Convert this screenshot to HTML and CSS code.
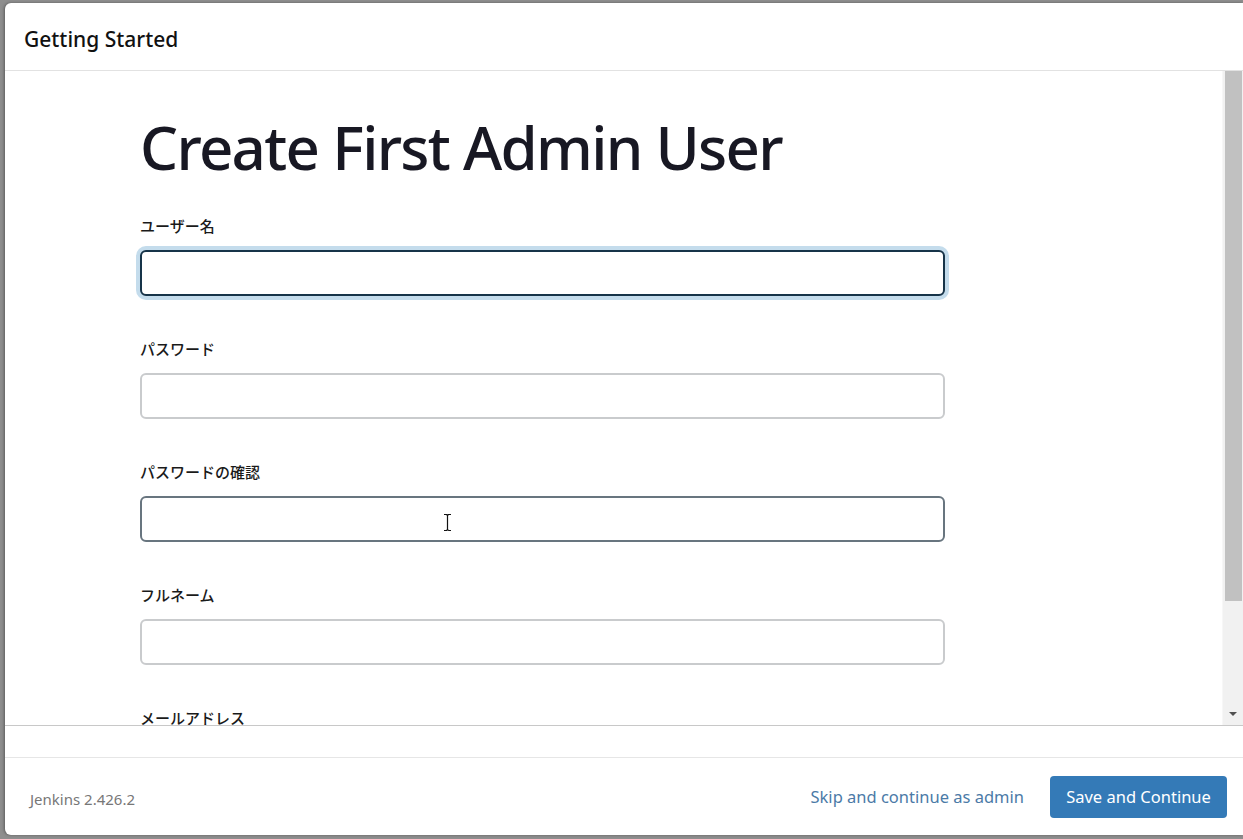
FILE: index.html
```html
<!DOCTYPE html>
<html lang="ja">
<head>
<meta charset="utf-8">
<title>Getting Started</title>
<link rel="stylesheet" href="styles.css">
</head>
<body>
<div class="dialog">
  <header class="dlg-header">Getting Started</header>
  <div class="dlg-main">
    <div class="dlg-content">
      <h1 class="title">Create First Admin User</h1>
      <form class="form">
        <div class="field">
          <label class="label">ユーザー名</label>
          <input class="input input-focus" type="text">
        </div>
        <div class="field">
          <label class="label">パスワード</label>
          <input class="input" type="password">
        </div>
        <div class="field field-cursor">
          <label class="label">パスワードの確認</label>
          <input class="input input-hover" type="password">
          <svg class="ibeam" width="9" height="19" viewBox="0 0 9 19"><path d="M1 1.5h2.5M5.5 1.5H8M4.5 2.5v14M1 17.5h2.5M5.5 17.5H8M3.5 1.5l1 1 1-1M3.5 17.5l1-1 1 1" stroke="#111" stroke-width="1.2" fill="none"/></svg>
        </div>
        <div class="field">
          <label class="label">フルネーム</label>
          <input class="input" type="text">
        </div>
        <div class="field">
          <label class="label">メールアドレス</label>
          <input class="input" type="text">
        </div>
      </form>
    </div>
    <div class="scrollbar">
      <div class="thumb"></div>
      <div class="track-space"></div>
      <div class="arrow"></div>
    </div>
  </div>
  <div class="spacer"></div>
  <footer class="dlg-footer">
    <span class="version">Jenkins 2.426.2</span>
    <div class="actions">
      <a class="skip" href="#">Skip and continue as admin</a>
      <button class="btn" type="button">Save and Continue</button>
    </div>
  </footer>
</div>
</body>
</html>
```

FILE: styles.css
```css
* { box-sizing: border-box; }
html, body { margin: 0; height: 100%; }
body {
  background: #8e8e8e;
  padding: 3px 0 4px 5px;
  font-family: "Noto Sans", "Noto Sans CJK JP", sans-serif;
  color: #1b1b24;
  overflow: hidden;
}
.dialog {
  height: 832px;
  background: #fff;
  border-radius: 6px 0 0 6px;
  display: flex;
  flex-direction: column;
  overflow: hidden;
  box-shadow: -1px 0 3px rgba(0,0,0,0.35);
}
.dlg-header {
  height: 68px;
  flex: none;
  display: flex;
  align-items: center;
  padding-left: 19px;
  padding-top: 4px;
  font-size: 21px;
  font-weight: 500;
  color: #111;
  border-bottom: 1px solid #e2e2e2;
}
.dlg-main {
  height: 655px;
  flex: none;
  display: flex;
  border-bottom: 1px solid #c8c8c8;
}
.dlg-content {
  flex: 1;
  overflow: hidden;
  padding-left: 135px;
  padding-top: 36px;
}
.title {
  margin: 0 0 29px;
  font-size: 60px;
  line-height: 80px;
  font-weight: 500;
  letter-spacing: -1.7px;
  color: #181823;
}
.form { width: 805px; }
.field {
  margin-bottom: 43px;
  position: relative;
}
.label {
  display: block;
  font-size: 15px;
  line-height: 20px;
  margin-bottom: 14px;
  color: #1a1a1a;
  font-weight: 500;
  font-family: "Noto Sans CJK JP", sans-serif;
}
.input {
  display: block;
  width: 100%;
  height: 46px;
  border: 2px solid #c9cbcd;
  border-radius: 6px;
  background: #fff;
  outline: none;
  font: inherit;
}
.input-focus {
  border-color: #173449;
  box-shadow: 0 0 0 4px #c4dcec;
}
.input-hover { border-color: #68757f; }
.ibeam {
  position: absolute;
  left: 303px;
  top: 51px;
}
.scrollbar {
  width: 21px;
  flex: none;
  background: #f1f1f1;
  display: flex;
  flex-direction: column;
  align-items: flex-start;
  padding-left: 2px;
  border-left: 1px solid #f7f7f7;
}
.thumb {
  width: 17px;
  height: 530px;
  background: #c1c1c1;
}
.track-space { flex: 1; }
.arrow {
  width: 0;
  height: 0;
  margin: 0 0 9px 4px;
  border-left: 4px solid transparent;
  border-right: 4px solid transparent;
  border-top: 4px solid #505050;
}
.spacer {
  height: 32px;
  flex: none;
  border-bottom: 1px solid #e6e6e6;
}
.dlg-footer {
  flex: 1;
  display: flex;
  align-items: center;
  justify-content: space-between;
  padding: 0 16px 0 25px;
}
.version {
  font-size: 15px;
  color: #777;
  padding-top: 4px;
}
.actions {
  display: flex;
  align-items: center;
  gap: 26px;
}
.skip {
  font-size: 16.5px;
  color: #4b7aa7;
  text-decoration: none;
}
.btn {
  width: 177px;
  height: 42px;
  border: none;
  border-radius: 4px;
  background: #347ab7;
  color: #fff;
  font: inherit;
  font-size: 16.5px;
  padding: 0;
}
```
